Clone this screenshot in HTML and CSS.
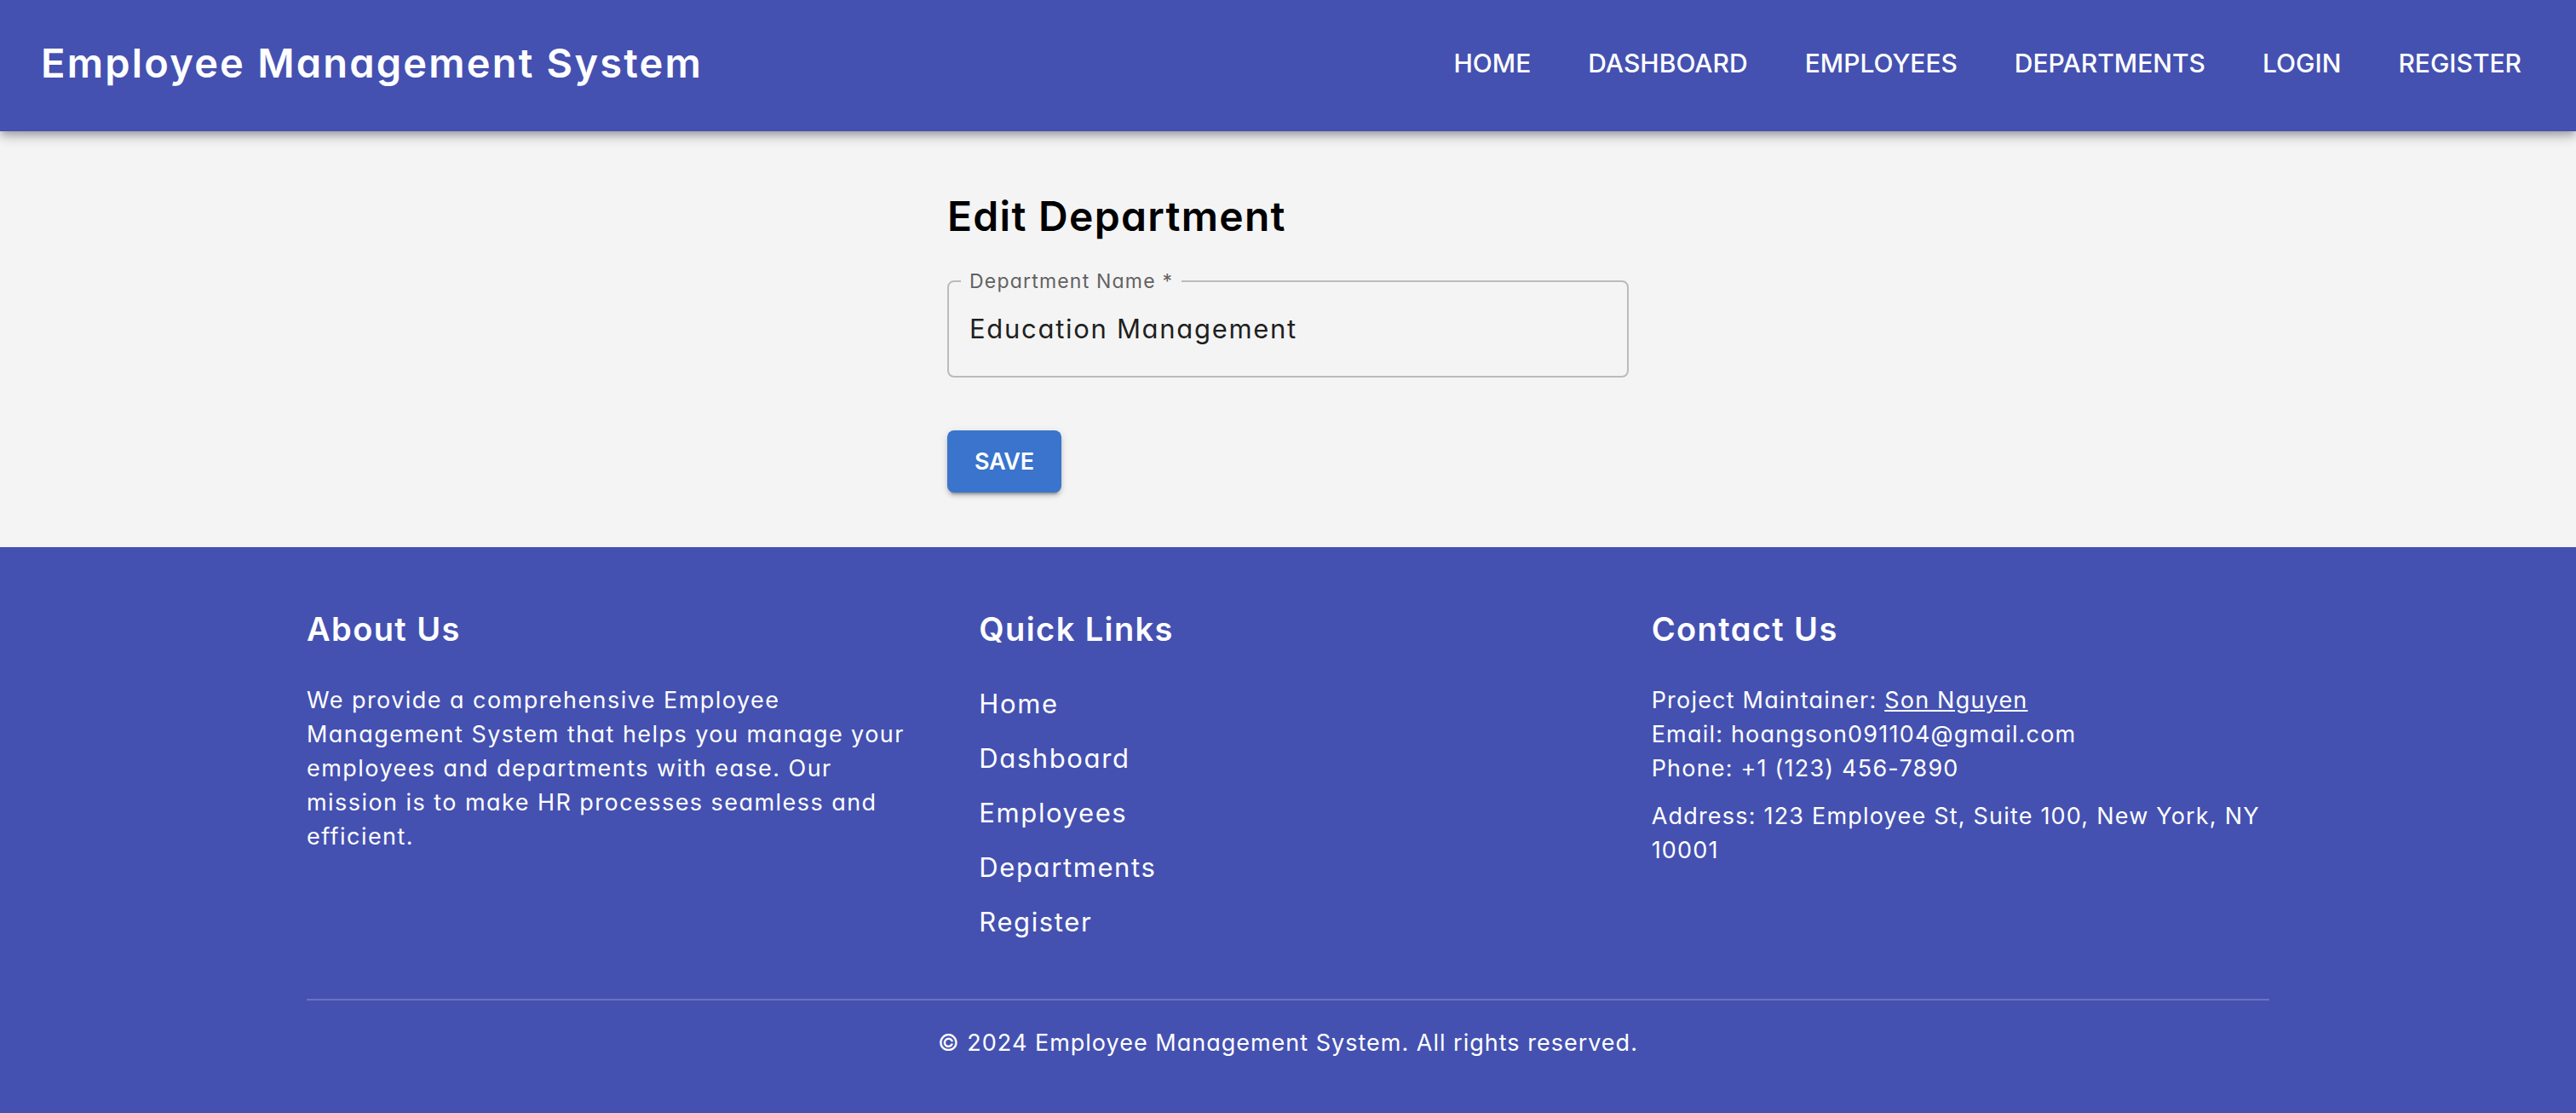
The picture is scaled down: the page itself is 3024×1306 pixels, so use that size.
FILE: index.html
```html
<!DOCTYPE html>
<html lang="en">
<head>
<meta charset="utf-8">
<title>Edit Department</title>
<link rel="stylesheet" href="styles.css">
</head>
<body>
<header class="appbar">
  <div class="brand">Employee Management System</div>
  <nav class="nav">
    <a href="#">HOME</a>
    <a href="#">DASHBOARD</a>
    <a href="#">EMPLOYEES</a>
    <a href="#">DEPARTMENTS</a>
    <a href="#">LOGIN</a>
    <a href="#">REGISTER</a>
  </nav>
</header>
<main class="main">
  <div class="form">
    <h1 class="page-title">Edit Department</h1>
    <fieldset class="field">
      <legend class="field-label">Department Name *</legend>
      <div class="field-value">Education Management</div>
    </fieldset>
    <button class="save" type="button">SAVE</button>
  </div>
</main>
<footer class="footer">
  <div class="footer-inner">
    <div class="footer-grid">
      <section class="col">
        <h2 class="col-title">About Us</h2>
        <p class="text about-text">We provide a comprehensive Employee Management System that helps you manage your employees and departments with ease. Our mission is to make HR processes seamless and efficient.</p>
      </section>
      <section class="col">
        <h2 class="col-title">Quick Links</h2>
        <ul class="links">
          <li><a href="#">Home</a></li>
          <li><a href="#">Dashboard</a></li>
          <li><a href="#">Employees</a></li>
          <li><a href="#">Departments</a></li>
          <li><a href="#">Register</a></li>
        </ul>
      </section>
      <section class="col">
        <h2 class="col-title">Contact Us</h2>
        <p class="text">Project Maintainer: <a class="maint" href="#">Son Nguyen</a><br>Email: hoangson091104@gmail.com<br>Phone: +1 (123) 456-7890</p>
        <p class="text address">Address: 123 Employee St, Suite 100, New York, NY 10001</p>
      </section>
    </div>
    <hr class="divider">
    <p class="copy">© 2024 Employee Management System. All rights reserved.</p>
  </div>
</footer>
</body>
</html>
```

FILE: styles.css
```css
* { box-sizing: border-box; }
html, body { margin: 0; }
body {
  font-family: Inter, "Open Sans", sans-serif;
  font-feature-settings: "cv11" 1;
  background: #f4f4f4;
  color: #000;
  min-height: 100vh;
  display: flex;
  flex-direction: column;
}
.appbar {
  height: 154px;
  padding: 0 48px 7px;
  background: #4451b1;
  color: #fff;
  display: flex;
  align-items: center;
  justify-content: space-between;
  box-shadow: 0 4px 8px -2px rgba(0,0,0,.2), 0 8px 10px rgba(0,0,0,.14), 0 2px 20px rgba(0,0,0,.12);
  position: relative;
  z-index: 1;
}
.brand { font-size: 47px; font-weight: 600; letter-spacing: 2.2px; }
.nav { display: flex; gap: 35px; }
.nav a {
  padding: 0 16px;
  font-size: 30px;
  font-weight: 500;
  color: #fff;
  text-decoration: none;
}
.main { flex: 1; padding: 68px 0 64px; }
.form { width: 800px; margin: 0 auto; }
.page-title { margin: 0 0 32px; font-size: 48px; line-height: 64px; font-weight: 600; letter-spacing: 1.3px; }
.field {
  margin: 0;
  padding: 24px 24px 35px;
  border: 2px solid #bbb;
  border-radius: 8px;
  min-width: 0;
}
.field-label {
  margin-left: -10px;
  padding: 0 10px;
  font-size: 23px;
  line-height: 24px;
  letter-spacing: 1.2px;
  color: #626262;
}
.field-value { font-size: 31px; line-height: 40px; letter-spacing: 1.7px; color: #1f1f1f; }
.save {
  display: flex;
  align-items: center;
  margin-top: 62px;
  height: 73px;
  padding: 0 32px;
  border: 0;
  border-radius: 8px;
  background: #3a74cd;
  color: #fff;
  font-family: inherit;
  font-size: 27px;
  font-weight: 600;
  letter-spacing: -0.3px;
  box-shadow: 0 6px 2px -4px rgba(0,0,0,.2), 0 4px 4px rgba(0,0,0,.14), 0 2px 10px rgba(0,0,0,.12);
}
.footer { background: #4451b1; color: #fff; padding: 64px 0 62px; }
.footer-inner { width: 2304px; margin: 0 auto; }
.footer-grid { display: grid; grid-template-columns: repeat(3, 1fr); column-gap: 64px; }
.col-title { margin: 0 0 32px; font-size: 38px; line-height: 64px; font-weight: 600; letter-spacing: 1.4px; }
.text { margin: 0; font-size: 27px; line-height: 40px; letter-spacing: 1.2px; }
.about-text { letter-spacing: 1.45px; }
.address { margin-top: 16px; }
.maint { color: #fff; }
.links { list-style: none; margin: 0; padding: 0; }
.links li { margin-bottom: 16px; }
.links a { display: block; font-size: 31px; line-height: 48px; letter-spacing: 1.6px; color: #fff; text-decoration: none; }
.divider { height: 2px; margin: 50px 0 30px; border: 0; background: rgba(255,255,255,.2); }
.copy { margin: 0; text-align: center; font-size: 27px; line-height: 40px; letter-spacing: 1px; }
```
